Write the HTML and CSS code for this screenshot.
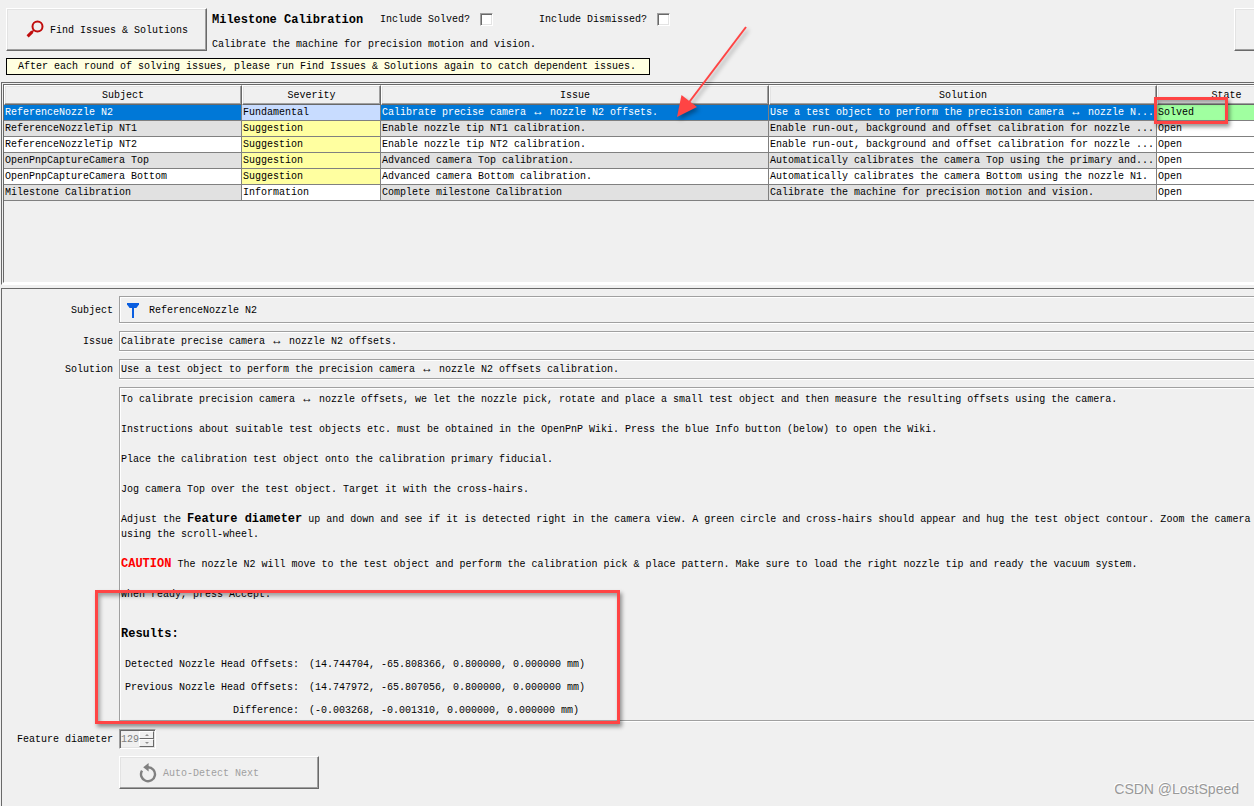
FILE: index.html
```html
<!DOCTYPE html>
<html lang="en">
<head>
<meta charset="utf-8">
<title>Issues &amp; Solutions</title>
<link rel="stylesheet" href="styles.css">
</head>
<body>
<header class="toolbar">
  <button class="btn" type="button">
    <svg class="icon" width="20" height="20" viewBox="0 0 20 20"><circle cx="12.5" cy="6.5" r="5" fill="none" stroke="#c00c0c" stroke-width="2"/><path d="M9 10L7 12" stroke="#c00c0c" stroke-width="1.6"/><path d="M7.4 11.600L2.600 16.400" stroke="#c00c0c" stroke-width="3"/></svg>
    Find Issues &amp; Solutions
  </button>
  <div class="milestone">
    <div class="options">
      <strong class="title">Milestone Calibration</strong>
      <label class="option first" for="solved">Include Solved?</label><input class="check" type="checkbox" id="solved">
      <label class="option" for="dismissed">Include Dismissed?</label><input class="check" type="checkbox" id="dismissed">
    </div>
    <div>Calibrate the machine for precision motion and vision.</div>
  </div>
  <button class="btn edge" type="button" aria-label="More"></button>
</header>
<div class="notice">After each round of solving issues, please run Find Issues &amp; Solutions again to catch dependent issues.</div>

<section class="pane">
  <table class="issues">
    <colgroup><col class="c-subject"><col class="c-short"><col><col><col class="c-short"></colgroup>
    <thead><tr><th>Subject</th><th>Severity</th><th>Issue</th><th>Solution</th><th>State</th></tr></thead>
    <tbody>
      <tr class="selected"><td>ReferenceNozzle N2</td><td class="fundamental">Fundamental</td><td>Calibrate precise camera <span class="dbl">↔</span> nozzle N2 offsets.</td><td>Use a test object to perform the precision camera <span class="dbl">↔</span> nozzle N...</td><td class="solved">Solved</td></tr>
      <tr class="odd"><td>ReferenceNozzleTip NT1</td><td class="suggestion">Suggestion</td><td>Enable nozzle tip NT1 calibration.</td><td>Enable run-out, background and offset calibration for nozzle ...</td><td class="plain">Open</td></tr>
      <tr><td>ReferenceNozzleTip NT2</td><td class="suggestion">Suggestion</td><td>Enable nozzle tip NT2 calibration.</td><td>Enable run-out, background and offset calibration for nozzle ...</td><td class="plain">Open</td></tr>
      <tr class="odd"><td>OpenPnpCaptureCamera Top</td><td class="suggestion">Suggestion</td><td>Advanced camera Top calibration.</td><td>Automatically calibrates the camera Top using the primary and...</td><td class="plain">Open</td></tr>
      <tr><td>OpenPnpCaptureCamera Bottom</td><td class="suggestion">Suggestion</td><td>Advanced camera Bottom calibration.</td><td>Automatically calibrates the camera Bottom using the nozzle N1.</td><td class="plain">Open</td></tr>
      <tr class="odd"><td>Milestone Calibration</td><td class="plain">Information</td><td>Complete milestone Calibration</td><td>Calibrate the machine for precision motion and vision.</td><td class="plain">Open</td></tr>
    </tbody>
  </table>
</section>

<main class="details">
  <label class="name" for="f-subject">Subject</label>
  <output class="field subject" id="f-subject">
    <svg width="12" height="16" viewBox="0 0 12 16"><path d="M0 0H12V1.4L9.4 5H2.6L0 1.4Z" fill="#0a5ee0"/><path d="M6 5V15" stroke="#0a5ee0" stroke-width="2"/></svg>
    ReferenceNozzle N2
  </output>
  <label class="name" for="f-issue">Issue</label>
  <output class="field" id="f-issue">Calibrate precise camera <span class="dbl">↔</span> nozzle N2 offsets.</output>
  <label class="name" for="f-solution">Solution</label>
  <output class="field" id="f-solution">Use a test object to perform the precision camera <span class="dbl">↔</span> nozzle N2 offsets calibration.</output>
  <article class="field text">
    <p>To calibrate precision camera <span class="dbl">↔</span> nozzle offsets, we let the nozzle pick, rotate and place a small test object and then measure the resulting offsets using the camera.</p>
    <p>Instructions about suitable test objects etc. must be obtained in the OpenPnP Wiki. Press the blue Info button (below) to open the Wiki.</p>
    <p>Place the calibration test object onto the calibration primary fiducial.</p>
    <p>Jog camera Top over the test object. Target it with the cross-hairs.</p>
    <p>Adjust the <strong>Feature diameter</strong> up and down and see if it is detected right in the camera view. A green circle and cross-hairs should appear and hug the test object contour. Zoom the camera using the scroll-wheel.</p>
    <p><strong class="caution">CAUTION</strong> The nozzle N2 will move to the test object and perform the calibration pick &amp; place pattern. Make sure to load the right nozzle tip and ready the vacuum system.</p>
    <p>When ready, press Accept.</p>
    <h4>Results:</h4>
    <table class="results">
      <tr><th>Detected Nozzle Head Offsets:</th><td>(14.744704, -65.808366, 0.800000, 0.000000 mm)</td></tr>
      <tr><th>Previous Nozzle Head Offsets:</th><td>(14.747972, -65.807056, 0.800000, 0.000000 mm)</td></tr>
      <tr><th>Difference:</th><td>(-0.003268, -0.001310, 0.000000, 0.000000 mm)</td></tr>
    </table>
  </article>
  <label class="name" for="diameter">Feature diameter</label>
  <div class="spinner">
    <input id="diameter" type="text" value="129" disabled>
    <div class="steps">
      <button type="button" disabled aria-label="Increase"><svg width="4" height="2" viewBox="0 0 4 2"><path d="M0 2L2 0L4 2Z" fill="#909090"/></svg></button>
      <button type="button" disabled aria-label="Decrease"><svg width="4" height="2" viewBox="0 0 4 2"><path d="M0 0L2 2L4 0Z" fill="#909090"/></svg></button>
    </div>
  </div>
  <button class="btn next" type="button" disabled>
    <svg class="icon" width="20" height="20" viewBox="0 0 20 20"><path d="M10 4.200A7 7 0 1 1 4 7.600" fill="none" stroke="#808080" stroke-width="2.400"/><path d="M10.600 0V8.400L5.200 4.200Z" fill="#808080"/></svg>
    Auto-Detect Next
  </button>
</main>

<div class="mark mark-state"></div>
<div class="mark mark-results"></div>
<svg class="pointer" width="80" height="100" viewBox="0 0 80 100"><path d="M73 4L14 82" stroke="#ff4444" stroke-width="2"/><path d="M4 94L8.500 72L24 84Z" fill="#ff4444"/></svg>
<div class="watermark">CSDN @LostSpeed</div>
</body>
</html>
```
FILE: styles.css
```css
* { box-sizing: border-box; }
body {
  margin: 0;
  position: relative;
  min-height: 100vh;
  display: flex;
  flex-direction: column;
  overflow: hidden;
  background: #f0f0f0;
  color: #000;
  font: 10px/15px "Liberation Mono", monospace;
}
button, input { font: inherit; color: inherit; }
strong { font-size: 12px; line-height: 12px; }
.dbl { font-family: "Liberation Sans", sans-serif; font-size: 12px; line-height: 12px; }

.btn {
  display: flex;
  align-items: center;
  gap: 5px;
  width: 201px;
  height: 43px;
  flex-shrink: 0;
  padding: 1px 0 0 18px;
  background: #f0f0f0;
  border: 1px solid;
  border-color: #fff #696969 #696969 #fff;
  box-shadow: inset -1px -1px #a0a0a0, inset 1px 1px #e3e3e3;
}
.toolbar { display: flex; padding: 8px 0 0 6px; }
.milestone { flex: 1; min-width: 0; padding: 4px 0 0 5px; white-space: nowrap; }
.options { display: flex; align-items: center; margin-bottom: 10px; }
.title { width: 148px; }
.option { margin-left: 46px; }
.option.first { margin-left: 20px; }
.check {
  appearance: none;
  width: 13px;
  height: 13px;
  margin: 0 0 0 10px;
  background: #fff;
  border: 1px solid;
  border-color: #a0a0a0 #fff #fff #a0a0a0;
  box-shadow: inset 1px 1px #696969, inset -1px -1px #e3e3e3;
}
.edge { margin-right: -181px; }
.notice {
  align-self: flex-start;
  margin: 6px 0 0 6px;
  padding: 0 13px 0 11px;
  background: #ffffe1;
  border: 1px solid #000;
}

.pane {
  height: 203px;
  margin: 7px 0 0 1px;
  border-width: 3px 0 3px 3px;
  border-style: double none solid double;
  border-color: #696969 #fff #fff #696969;
  overflow: hidden;
}
.issues {
  width: calc(100% + 42px);
  table-layout: fixed;
  border-collapse: separate;
  border-spacing: 0;
}
.c-subject { width: 238px; }
.c-short { width: 139px; }
.issues th {
  height: 20px;
  padding: 0;
  font-weight: 400;
  border: 1px solid;
  border-color: #fff #696969 #696969 #fff;
  box-shadow: inset -1px -1px #a0a0a0, inset 1px 1px #e3e3e3;
}
.issues td {
  height: 16px;
  padding: 0 0 0 1px;
  white-space: nowrap;
  overflow: hidden;
  background: #fff;
  border: solid #808080;
  border-width: 0 1px 1px 0;
}
.issues .odd td { background: #e1e1e1; }
.issues .selected td { background: #0078d7; color: #fff; }
.issues .selected .fundamental { background: #c8dcff; color: #000; }
.issues .selected .solved { background: #a0ffa0; color: #000; }
.issues tr .suggestion, .issues .odd .suggestion { background: #ffffa0; }
.issues .odd .plain { background: #fff; }

.details {
  flex: 1;
  display: grid;
  grid-template-columns: 111px 1fr;
  grid-auto-rows: max-content;
  gap: 7px 6px;
  align-items: center;
  margin: 3px -8px 0 1px;
  padding: 7px 0 10px;
  border: solid #696969;
  border-width: 1px 0 0 1px;
}
.name { text-align: right; }
.field {
  display: block;
  margin-bottom: 1px;
  padding: 2px 1px 1px;
  border: 1px solid #a0a0a0;
  box-shadow: inset 1px 1px #fff, 0 1px #fff;
}
.subject { display: flex; align-items: center; gap: 10px; height: 27px; padding: 3px 7px 1px; }
.text { grid-column: 2; padding: 4px 1px 0; }
.text p { margin: 0 0 15px; }
.text h4 { margin: 25px 0 11px; font-size: 12px; }
.caution { color: #f00; }
.results { border-collapse: collapse; }
.results th { padding: 4px 0 4px 4px; text-align: right; font-weight: 400; }
.results td { padding: 4px 0 4px 10px; }
.results tr:last-child > * { padding-bottom: 2px; }
.spinner {
  display: flex;
  width: 37px;
  height: 20px;
  border: 1px solid;
  border-color: #a0a0a0 #fff #fff #a0a0a0;
  box-shadow: inset 1px 1px #696969, inset -1px -1px #e3e3e3;
  padding: 1px;
}
.spinner input { width: 18px; min-width: 0; padding: 0; border: 0; background: none; color: #808080; }
.steps { display: flex; flex-direction: column; flex: 1; }
.steps button {
  display: flex;
  flex: 1;
  align-items: center;
  justify-content: center;
  padding: 0;
  background: #f0f0f0;
  border: 1px solid;
  border-color: #fff #696969 #696969 #fff;
}
.next { grid-column: 2; width: 200px; height: 33px; color: #a0a0a0; }

.mark { position: absolute; border: 3px solid #ff4444; box-shadow: 2px 3px 4px rgba(0, 0, 0, .4), inset 2px 3px 4px rgba(0, 0, 0, .35); }
.mark-state { left: 1154px; top: 97px; width: 74px; height: 27px; }
.mark-results { left: 95px; top: 590px; width: 525px; height: 134px; }
.pointer { position: absolute; left: 673px; top: 23px; filter: drop-shadow(2px 3px 2px rgba(0, 0, 0, .35)); }
.watermark {
  position: absolute;
  right: 15px;
  bottom: 8px;
  color: #999;
  font: 14px/18px "Liberation Sans", sans-serif;
  text-shadow: -1px -1px #fff;
}
```
